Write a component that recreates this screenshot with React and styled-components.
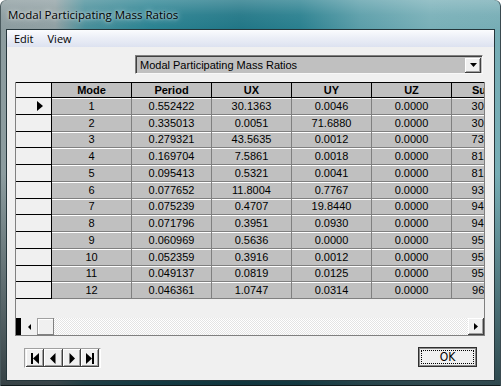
import React from 'react';
import styled, { createGlobalStyle } from 'styled-components';

const Global = createGlobalStyle`
  html, body { margin: 0; padding: 0; background: #ffffff; }
  body { font-family: "Liberation Sans", Arial, sans-serif; }
  #root { width: 501px; height: 386px; }
`;

const Window = styled.div`
  width: 501px;
  height: 386px;
  box-sizing: border-box;
  display: flex;
  flex-direction: column;
  border-radius: 6px 6px 0 0;
  overflow: hidden;
  background:
    linear-gradient(180deg, rgba(255,255,255,0.22) 0, rgba(255,255,255,0.05) 15px, rgba(0,0,0,0) 29px),
    linear-gradient(180deg, rgba(0,0,0,0) 45%, rgba(8,18,22,0.65) 100%),
    linear-gradient(90deg, #8c9c9f 0, #90a0a3 55px, #4a8f9a 85px, #2b8392 150px, #217686 240px, #2a808f 300px, #5b9ea9 360px, #79b0b8 430px, #76adb5 501px);
  box-shadow: inset 1px 0 0 #4a5a5e, inset -1px 0 0 #3a4a50, inset 0 -1px 0 #101a1c;
`;

const TitleBar = styled.div`
  height: 29px;
  flex: none;
  display: flex;
  align-items: center;
  padding-left: 8px;
  font-family: "Open Sans", "Noto Sans", sans-serif;
  font-size: 11.5px;
  color: #000;
  text-shadow: 0 0 6px rgba(255,255,255,0.8), 0 0 3px rgba(255,255,255,0.6);
`;

const Client = styled.div`
  flex: 1;
  margin: 0 6px 5px 6px;
  border: 1px solid #25363b;
  background: #f0f0f0;
  display: flex;
  flex-direction: column;
  min-height: 0;
`;

const MenuBar = styled.div`
  height: 17px;
  flex: none;
  display: flex;
  align-items: center;
  gap: 14px;
  padding-left: 7px;
  background: linear-gradient(180deg, #fbfcfe 0, #eceff7 45%, #dde2f0 100%);
  font-family: "Open Sans", "Noto Sans", sans-serif;
  font-size: 11px;
  color: #000;
`;

const MenuItem = styled.span`
  line-height: 17px;
`;

const Content = styled.div`
  flex: 1;
  display: flex;
  flex-direction: column;
  padding: 8px 9px 0 8px;
`;

const Dropdown = styled.div`
  margin-left: 120px;
  width: 348px;
  height: 19px;
  box-sizing: border-box;
  display: flex;
  align-items: center;
  justify-content: space-between;
  border: 1px solid;
  border-color: #808080 #f8f8f8 #f8f8f8 #808080;
  box-shadow: inset 1px 1px 0 #404040;
  background: #c0c0c0;
  font-size: 11px;
  color: #000;
  padding-left: 4px;
`;

const DropButton = styled.div`
  width: 16px;
  height: 15px;
  margin-right: 1px;
  margin-top: 1px;
  box-sizing: border-box;
  background: #f0f0f0;
  display: flex;
  align-items: center;
  justify-content: center;
  box-shadow: inset -1px -1px 0 #404040, inset 1px 1px 0 #ffffff, inset -2px -2px 0 #a0a0a0;
`;

const Grid = styled.div`
  margin-top: 8px;
  height: 254px;
  box-sizing: border-box;
  border: 1px solid #808080;
  border-top: none;
  display: flex;
  flex-direction: column;
  background: #f0f0f0;
`;

const Viewport = styled.div`
  flex: 1;
  overflow: hidden;
  min-height: 0;
`;

const Table = styled.div`
  display: grid;
  grid-template-columns: 36px repeat(6, 80px);
  grid-template-rows: 16px repeat(12, 16.75px);
  width: 516px;
`;

const HeadCell = styled.div`
  box-sizing: border-box;
  background: ${p => (p.$corner ? '#f0f0f0' : '#c0c0c0')};
  border-top: 1px solid #000;
  border-right: 1px solid #000;
  border-bottom: 1px solid #000;
  display: flex;
  align-items: center;
  justify-content: center;
  font-weight: bold;
  font-size: 11px;
  color: #000;
  white-space: nowrap;
  overflow: hidden;
`;

const RowHead = styled.div`
  box-sizing: border-box;
  background: #f0f0f0;
  border-right: 1px solid #000;
  border-bottom: 1px solid #000;
  display: flex;
  align-items: center;
  padding-left: 21px;
`;

const Cell = styled.div`
  box-sizing: border-box;
  background: #c0c0c0;
  border-right: 1px solid #808080;
  border-bottom: 1px solid #808080;
  box-shadow: inset 0 1px 0 #ffffff;
  display: flex;
  align-items: center;
  justify-content: center;
  font-size: 11px;
  color: #000;
  white-space: nowrap;
  overflow: hidden;
`;

const ScrollBar = styled.div`
  height: 17px;
  flex: none;
  display: flex;
`;

const ScrollEdge = styled.div`
  width: 5px;
  background: #000;
`;

const ScrollArrow = styled.div`
  width: 16px;
  box-sizing: border-box;
  background: #f0f0f0;
  display: flex;
  align-items: center;
  justify-content: center;
  box-shadow: ${p => (p.$flat ? 'none' : 'inset -1px -1px 0 #404040, inset 1px 1px 0 #ffffff, inset -2px -2px 0 #a0a0a0')};
`;

const Thumb = styled.div`
  width: 17px;
  box-sizing: border-box;
  background: #f0f0f0;
  box-shadow: inset -1px -1px 0 #808080, inset 1px 1px 0 #a0a0a0, inset 2px 2px 0 #ffffff;
`;

const Track = styled.div`
  flex: 1;
  background-color: #ffffff;
  background-image: repeating-conic-gradient(#ffffff 0 25%, #e4e4e4 0 50%);
  background-size: 2px 2px;
`;

const Footer = styled.div`
  margin-top: 11px;
  display: flex;
  justify-content: space-between;
  align-items: flex-start;
  padding: 0 8px 0 9px;
`;

const NavGroup = styled.div`
  margin-top: 1px;
  width: 77px;
  height: 20px;
  box-sizing: border-box;
  display: flex;
  padding: 0 1px;
  border: 1px solid;
  border-color: #a0a0a0 #ffffff #ffffff #a0a0a0;
`;

const NavButton = styled.div`
  flex: 1;
  box-sizing: border-box;
  background: #f0f0f0;
  display: flex;
  align-items: center;
  justify-content: center;
  box-shadow: inset -1px -1px 0 #404040, inset 1px 1px 0 #ffffff, inset -2px -2px 0 #a0a0a0, inset 0 0 0 1px #909090;
`;

const OkButton = styled.div`
  width: 59px;
  height: 20px;
  box-sizing: border-box;
  border: 1px solid #303030;
  box-shadow: inset 0 0 0 1px #8a8a8a;
  background: #f0f0f0;
  display: flex;
  padding: 2px;
`;

const FocusRect = styled.div`
  flex: 1;
  border: 1px dotted #000;
  display: flex;
  align-items: center;
  justify-content: center;
  font-family: "DejaVu Sans Condensed", "Liberation Sans", sans-serif;
  font-size: 12px;
  color: #000;
  letter-spacing: 0px;
`;

const Tri = ({ dir = 'right', w = 4, h = 7, color = '#000' }) => {
  const pts = {
    right: `0,0 ${w},${h / 2} 0,${h}`,
    left: `${w},0 0,${h / 2} ${w},${h}`,
    down: `0,0 ${w},0 ${w / 2},${h}`,
  }[dir];
  return (
    <svg width={w} height={h} viewBox={`0 0 ${w} ${h}`}>
      <polygon points={pts} fill={color} />
    </svg>
  );
};

const NavGlyph = ({ kind }) => (
  <svg width="10" height="11" viewBox="0 0 10 11">
    {kind === 'first' && (
      <>
        <rect x="1" y="0" width="2" height="11" fill="#000" />
        <polygon points="9,0 3,5.5 9,11" fill="#000" />
      </>
    )}
    {kind === 'prev' && <polygon points="7.5,0 2,5.5 7.5,11" fill="#000" />}
    {kind === 'next' && <polygon points="2.5,0 8,5.5 2.5,11" fill="#000" />}
    {kind === 'last' && (
      <>
        <polygon points="1,0 7,5.5 1,11" fill="#000" />
        <rect x="7" y="0" width="2" height="11" fill="#000" />
      </>
    )}
  </svg>
);

const columns = ['Mode', 'Period', 'UX', 'UY', 'UZ', 'SumUX'];

const rows = [
  ['1', '0.552422', '30.1363', '0.0046', '0.0000', '30.1363'],
  ['2', '0.335013', '0.0051', '71.6880', '0.0000', '30.1414'],
  ['3', '0.279321', '43.5635', '0.0012', '0.0000', '73.7049'],
  ['4', '0.169704', '7.5861', '0.0018', '0.0000', '81.2910'],
  ['5', '0.095413', '0.5321', '0.0041', '0.0000', '81.8231'],
  ['6', '0.077652', '11.8004', '0.7767', '0.0000', '93.6235'],
  ['7', '0.075239', '0.4707', '19.8440', '0.0000', '94.0942'],
  ['8', '0.071796', '0.3951', '0.0930', '0.0000', '94.4893'],
  ['9', '0.060969', '0.5636', '0.0000', '0.0000', '95.0529'],
  ['10', '0.052359', '0.3916', '0.0012', '0.0000', '95.4445'],
  ['11', '0.049137', '0.0819', '0.0125', '0.0000', '95.5264'],
  ['12', '0.046361', '1.0747', '0.0314', '0.0000', '96.6011'],
];

export default function App() {
  return (
    <>
      <Global />
      <Window>
        <TitleBar>Modal Participating Mass Ratios</TitleBar>
        <Client>
          <MenuBar>
            <MenuItem>Edit</MenuItem>
            <MenuItem>View</MenuItem>
          </MenuBar>
          <Content>
            <Dropdown>
              <span>Modal Participating Mass Ratios</span>
              <DropButton>
                <Tri dir="down" w={7} h={4} />
              </DropButton>
            </Dropdown>
            <Grid>
              <Viewport>
                <Table>
                  <HeadCell $corner />
                  {columns.map(c => (
                    <HeadCell key={c}>{c}</HeadCell>
                  ))}
                  {rows.map((r, i) => (
                    <React.Fragment key={r[0]}>
                      <RowHead>{i === 0 && <Tri dir="right" w={6} h={10} />}</RowHead>
                      {r.map((v, j) => (
                        <Cell key={j}>{v}</Cell>
                      ))}
                    </React.Fragment>
                  ))}
                </Table>
              </Viewport>
              <ScrollBar>
                <ScrollEdge />
                <ScrollArrow $flat>
                  <Tri dir="left" w={3} h={6} />
                </ScrollArrow>
                <Thumb />
                <Track />
                <ScrollArrow>
                  <Tri dir="right" w={4} h={7} />
                </ScrollArrow>
              </ScrollBar>
            </Grid>
            <Footer>
              <NavGroup>
                <NavButton><NavGlyph kind="first" /></NavButton>
                <NavButton><NavGlyph kind="prev" /></NavButton>
                <NavButton><NavGlyph kind="next" /></NavButton>
                <NavButton><NavGlyph kind="last" /></NavButton>
              </NavGroup>
              <OkButton>
                <FocusRect>OK</FocusRect>
              </OkButton>
            </Footer>
          </Content>
        </Client>
      </Window>
    </>
  );
}
